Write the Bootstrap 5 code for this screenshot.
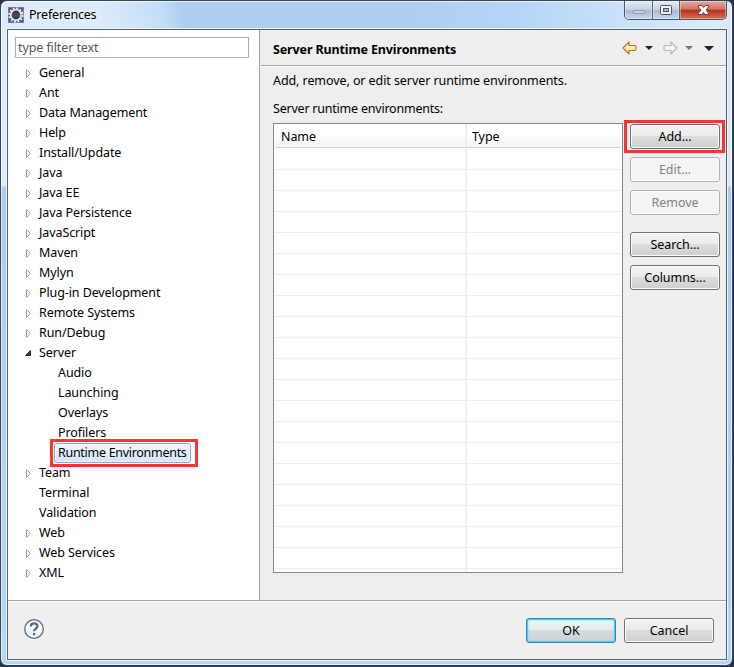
<!DOCTYPE html>
<html lang="en">
<head>
<meta charset="utf-8">
<title>Preferences</title>
<link href="https://cdn.jsdelivr.net/npm/bootstrap@5.3.0/dist/css/bootstrap.min.css" rel="stylesheet">
<style>
html,body{height:100%;overflow:hidden}
body{background:#2b3548;font:12.5px/20px "Noto Sans",sans-serif;letter-spacing:-.1px;color:#000;margin:0}
.win{width:733px;height:666px;border:1px solid #36455a;border-radius:7px;overflow:hidden;
 background:linear-gradient(75deg,transparent 0 100px,#c4def8 158px,#aecff2 178px 400px,#b5d5f6 500px,transparent 690px) 0 0/100% 28px no-repeat,linear-gradient(#dcebfa 0 185px,#a9cdf3 186px 230px,#b5d6f8);box-shadow:inset 0 0 0 1px #ffffffb0}
.titlebar{height:28px;padding:0 5px 0 7px}
.titlebar .name{padding-top:4px;margin-left:5px;letter-spacing:-.2px}
.appicon{width:16px;height:16px;margin-top:6px}
.glow{text-shadow:0 0 8px #fff,0 0 12px #fff}
.caps{height:19px;border:1px solid #465672;border-top:0;border-radius:0 0 5px 5px;overflow:hidden}
.caps>div{width:28px;border-right:1px solid #53647e;background:linear-gradient(#e4edf7,#c4d1e1 48%,#a5b8cf 50%,#c3d7ec);box-shadow:inset 0 0 0 1px #ffffff60}
.caps>div:nth-child(2){width:27px}
.caps>div:last-child{width:46px;border:0;background:linear-gradient(#e7aaa0,#cf7263 46%,#b52e1b 50%,#d8705a)}
.caps svg{display:block}
.client{width:720px;height:631px;margin-left:6px;border:1px solid #55616f;background:#efefef;box-shadow:0 0 0 1px #eaf5ff}
.tree-pane{width:252px;background:#fff;border-right:1px solid #a0a0a0;padding:7px 7px 0}
.filter{width:234px;height:21px;border:1px solid #abadb3;padding:0 2px;color:#555;line-height:19px;background:#fff;margin-bottom:5px}
.upper{height:571px;border-bottom:1px solid #a0a0a0}
.trow{height:20px;padding-left:24px;white-space:nowrap;position:relative}
.trow.closed,.trow.open{padding-left:10px}
.trow svg{width:8px;height:11px;margin:0 6px 0 0;flex:none}
.trow.kid{padding-left:43px}
.picked{width:137px;height:20px;margin-left:-4px;padding-left:3px;line-height:17px;border:1px solid #84acdd;border-radius:3px;background:linear-gradient(#f2f7fd,#d4e5f9);letter-spacing:-.29px;box-shadow:inset 0 0 0 1px #ffffff80}
.callout{position:absolute;border:3px solid #fa3434;pointer-events:none}
.callout.tree{left:35px;top:-4px;width:148px;height:28px}
.callout.add{left:-6px;top:-4px;width:101px;height:33px}
.heading{height:36px;border-bottom:1px solid #a0a0a0;box-shadow:0 1px #fff;padding:0 10px 0 12px;margin-left:1px}
.heading b{padding-top:4px;letter-spacing:-.13px}
.envs{width:350px;height:450px;border:1px solid #828790;background:#fff;padding:0 1px;overflow:hidden}
.thead-row{height:24px;background:linear-gradient(#fff 0 40%,#f3f4f6);line-height:25px;border-bottom:1px solid #d5d5d5;margin-bottom:1px}
.line-row{height:21px;border-bottom:1px solid #ededf0}
.cname{width:192px;border-right:2px solid #eceff5;padding-left:6px}
.ctype{padding-left:5px}
.wbtn{display:block;width:90px;height:25px;padding:0;font-size:12.5px;line-height:22px;letter-spacing:-.05px;color:#000;border:1px solid #707070;border-radius:3px;background:linear-gradient(#f3f3f3,#ebebeb 49%,#dddddd 50%,#cfcfcf);box-shadow:inset 0 0 0 1px #fcfcfc}
.wbtn.off,.wbtn.off:disabled{color:#838383;border-color:#adb2b5;background:#f4f4f4;opacity:1}
.wbtn.main{border-color:#3c7fb1;box-shadow:inset 0 0 0 1px #48d0f5,inset 0 0 2px 1px #66d9f8;background:linear-gradient(#f0f5f6,#e4ecee 49%,#d3dde0 50%,#c9d3d6)}
.body-pane{padding:5px 0 0 13px}
.desc{height:28px;letter-spacing:-.08px}
.lbl{height:24px;letter-spacing:-.22px}
.side{padding:1px 0 0 7px}
.side .wbtn+.wbtn,.side .off{margin-top:8px}
.side .wbtn.gap-above{margin-top:17px}
.footer-bar{border-top:1px solid #fff;padding:16px 12px 0 15px}
</style>
</head>
<body>
<div class="win">
<div class="titlebar d-flex">
<svg class="appicon" viewBox="0 0 16 16"><rect width="16" height="16" fill="#5c4c88"/><rect x=".5" y=".5" width="15" height="15" fill="none" stroke="#8173a8"/><circle cx="8" cy="8" r="6.6" fill="none" stroke="#eee" stroke-width="1.8" stroke-dasharray="2 1.456"/><circle cx="8" cy="8" r="5.2" fill="#383448" stroke="#f2f0ee" stroke-width="1.6"/><path d="M4 7h8M4 9h8" stroke="#77758c" stroke-width=".7"/></svg>
<div class="name flex-grow-1 glow">Preferences</div>
<div class="caps d-flex">
<div><svg width="27" height="19"><rect x="8.5" y="9.5" width="11" height="3" rx=".5" fill="#c9d2de" stroke="#909db0"/></svg></div>
<div><svg width="27" height="19"><rect x="7.5" y="4.5" width="11" height="9" rx="1" fill="#f7f7f7" stroke="#4b5468"/><rect x="10.5" y="7.5" width="5" height="3" fill="#a9bbd0" stroke="#4b5468"/></svg></div>
<div><svg width="46" height="19"><path d="M18.500 4.500h3.300l1.700 2 1.700-2h3.300v1.500l-2.500 3 2.500 3v1.500h-3.300l-1.700-2-1.700 2h-3.300v-1.500l2.500-3-2.500-3z" fill="#fff" stroke="#5c4350"/></svg></div>
</div></div>
<div class="client">
<div class="upper d-flex">
<div class="tree-pane">
<div class="filter">type filter text</div>
<div id="tree">
<div class="trow closed">General</div><div class="trow closed">Ant</div><div class="trow closed">Data Management</div><div class="trow closed">Help</div><div class="trow closed">Install/Update</div><div class="trow closed">Java</div><div class="trow closed">Java EE</div><div class="trow closed">Java Persistence</div><div class="trow closed">JavaScript</div><div class="trow closed">Maven</div><div class="trow closed">Mylyn</div><div class="trow closed">Plug-in Development</div><div class="trow closed">Remote Systems</div><div class="trow closed">Run/Debug</div><div class="trow open">Server</div>
<div class="trow kid">Audio</div><div class="trow kid">Launching</div><div class="trow kid">Overlays</div><div class="trow kid">Profilers</div>
<div class="trow kid"><div class="picked">Runtime Environments</div><div class="callout tree"></div></div>
<div class="trow closed">Team</div><div class="trow">Terminal</div><div class="trow">Validation</div><div class="trow closed">Web</div><div class="trow closed">Web Services</div><div class="trow closed">XML</div>
</div>
</div>
<div class="flex-grow-1">
<div class="heading d-flex align-items-center"><b class="flex-grow-1">Server Runtime Environments</b>
<svg width="94" height="16" viewBox="0 0 94 16">
<defs><linearGradient id="gold" x2="0" y2="1"><stop stop-color="#fffdf0"/><stop offset="1" stop-color="#fbdc87"/></linearGradient></defs>
<path d="M1 8L7 2v3.500h5.500q1.500 0 1.500 1.500v2q0 1.500-1.500 1.500H7V14z" fill="url(#gold)" stroke="#b57a1a" stroke-width="1.200" stroke-linejoin="round"/>
<path d="M23 6h8l-4 4z" fill="#222"/>
<path d="M55 8l-6-6v3.500h-5.500q-1.500 0-1.500 1.500v2q0 1.500 1.500 1.500H49V14z" fill="#f5f5f5" stroke="#b8b8b8" stroke-width="1.200" stroke-linejoin="round"/>
<path d="M63 6h8l-4 4z" fill="#77777b"/>
<path d="M82 6h10l-5 5z" fill="#2a1748"/>
</svg></div>
<div class="body-pane">
<div class="desc">Add, remove, or edit server runtime environments.</div>
<div class="lbl">Server runtime environments:</div>
<div class="d-flex">
<div class="envs" id="envs"><div class="thead-row d-flex"><div class="cname">Name</div><div class="ctype">Type</div></div></div>
<div class="side">
<div class="position-relative"><button class="btn wbtn">Add...</button><div class="callout add"></div></div>
<button class="btn wbtn off" disabled>Edit...</button>
<button class="btn wbtn off" disabled>Remove</button>
<button class="btn wbtn gap-above">Search...</button>
<button class="btn wbtn">Columns...</button>
</div></div></div></div>
</div>
<div class="footer-bar d-flex">
<svg class="me-auto" width="22" height="22" viewBox="0 0 22 22"><circle cx="11" cy="11" r="9.300" fill="#f5f7fa" stroke="#536986" stroke-width="1.300"/><path d="M7.800 8.600c0-4.300 6.600-4.300 6.600-.4 0 2.600-3.300 2.400-3.300 5" fill="none" stroke="#536986" stroke-width="2.300"/><circle cx="11.100" cy="16.100" r="1.350" fill="#536986"/></svg>
<button class="btn wbtn main">OK</button><button class="btn wbtn ms-2">Cancel</button>
</div>
</div>
</div>
<script>
const ns='http://www.w3.org/2000/svg';
document.querySelectorAll('.closed,.open').forEach(r=>{
  r.classList.add('d-flex','align-items-center');
  const s=document.createElementNS(ns,'svg'),p=document.createElementNS(ns,'path');
  s.setAttribute('viewBox','0 0 8 11');
  const open=r.classList.contains('open');
  p.setAttribute('d',open?'M5.500 2.500v5h-5z':'M1.500 1.500v8l4-4z');
  p.setAttribute('fill',open?'#404040':'#fff');
  p.setAttribute('stroke',open?'#262626':'#a0a0a0');
  s.append(p);r.prepend(s);
});
for(let i=0;i<21;i++){
  const r=document.createElement('div');r.className='line-row d-flex';
  r.innerHTML='<div class="cname"></div>';document.getElementById('envs').append(r);
}
</script>
<script src="https://cdn.jsdelivr.net/npm/bootstrap@5.3.0/dist/js/bootstrap.bundle.min.js"></script>
</body>
</html>
